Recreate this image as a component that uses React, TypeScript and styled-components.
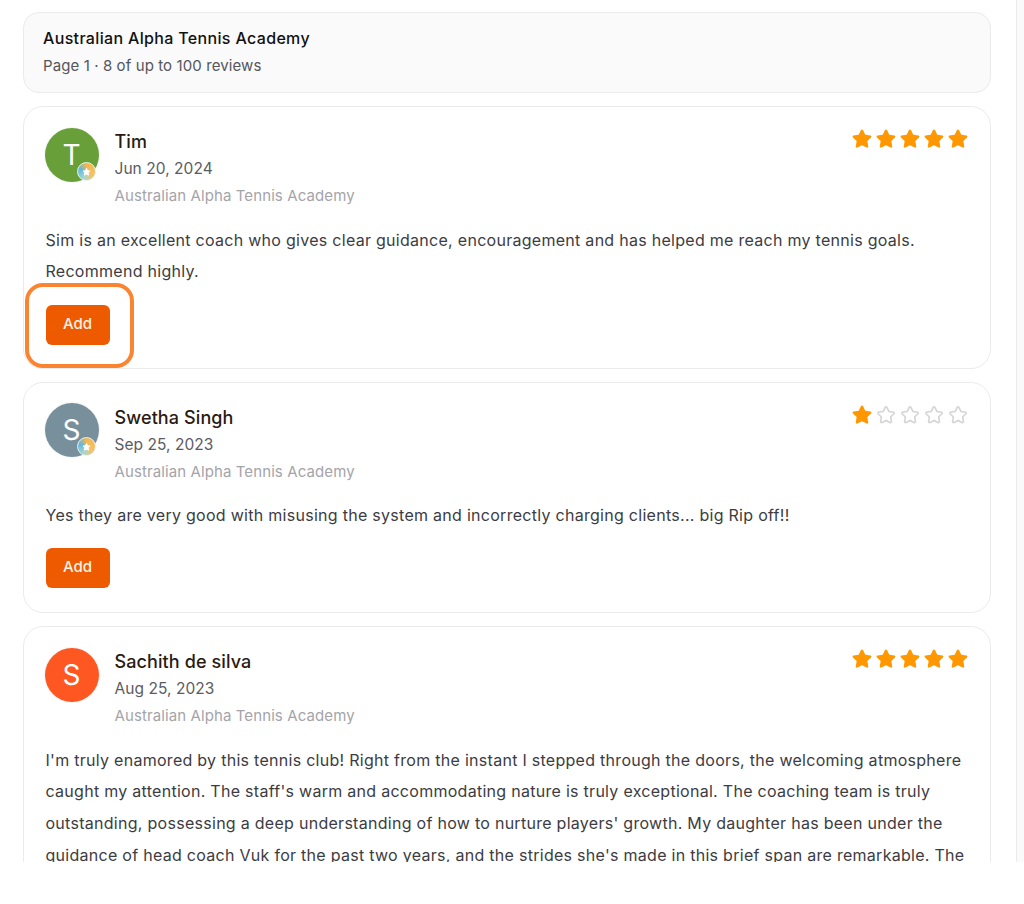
import React from 'react'
import styled, { createGlobalStyle } from 'styled-components'

const GlobalStyle = createGlobalStyle`
  html, body {
    margin: 0;
    padding: 0;
    background: #ffffff;
    font-family: Inter, "Liberation Sans", sans-serif;
  }
`

const Viewport = styled.div`
  height: 862px;
  width: 1024px;
  overflow: hidden;
  display: flex;
`

const Content = styled.main`
  width: 1016px;
  box-sizing: border-box;
  padding: 12px 25px 0 23px;
  display: flex;
  flex-direction: column;
  gap: 13px;
`

const ScrollTrack = styled.div`
  width: 8px;
  background: #fafafa;
  border-left: 1px solid #ebebeb;
  box-sizing: border-box;
`

const Summary = styled.header`
  height: 81.3px;
  box-sizing: border-box;
  flex-shrink: 0;
  background: #fafafa;
  border: 1.5px solid #ebebeb;
  border-radius: 16px;
  padding: 15px 19px;
`

const SummaryTitle = styled.h1`
  margin: 0;
  font-size: 16px;
  line-height: 20px;
  font-weight: 500;
  letter-spacing: 0.34px;
  color: #111111;
`

const SummaryMeta = styled.p`
  margin: 8px 0 0;
  font-size: 15px;
  line-height: 20px;
  letter-spacing: 0.1px;
  color: #55555c;
`

const Card = styled.article<{ $height?: number }>`
  position: relative;
  box-sizing: border-box;
  flex-shrink: 0;
  height: ${p => (p.$height ? `${p.$height}px` : 'auto')};
  border: 1.5px solid #ebebeb;
  border-radius: 20px;
  padding: 20.3px 21px 15px 20.5px;
  background: #ffffff;
`

const CardTop = styled.div`
  display: flex;
  justify-content: space-between;
  align-items: flex-start;
`

const Author = styled.div`
  display: flex;
  gap: 16px;
`

const Avatar = styled.div<{ $color: string }>`
  position: relative;
  width: 54px;
  height: 54px;
  border-radius: 50%;
  background: ${p => p.$color};
  color: #ffffff;
  font-size: 28px;
  display: flex;
  align-items: center;
  justify-content: center;
  flex-shrink: 0;
  box-shadow: 0 0 0 1px rgba(0, 0, 0, 0.04);
`

const Badge = styled.span`
  position: absolute;
  right: 3px;
  bottom: 1px;
  width: 19px;
  height: 19px;
  border-radius: 50%;
  border: 1.5px solid #e8f1f2;
  box-sizing: border-box;
  background: conic-gradient(#f6b64c 0deg, #f3c368 130deg, #a8d8cf 200deg, #62b8dd 290deg, #f6b64c 360deg);
  display: flex;
  align-items: center;
  justify-content: center;
`

const AuthorText = styled.div`
  display: flex;
  flex-direction: column;
  padding-top: 3.7px;
`

const AuthorName = styled.div`
  font-size: 18px;
  line-height: 22px;
  font-weight: 500;
  letter-spacing: 0.1px;
  color: #2a1a12;
`

const ReviewDate = styled.div`
  margin-top: 6px;
  font-size: 15.5px;
  line-height: 20px;
  letter-spacing: 0.05px;
  color: #5b5b62;
`

const Place = styled.div`
  margin-top: 7px;
  font-size: 15px;
  line-height: 20px;
  letter-spacing: 0.1px;
  color: #a4a4aa;
`

const Stars = styled.div`
  display: flex;
  gap: 1.9px;
  margin-top: -0.5px;
`

const ReviewBody = styled.p`
  margin: 18.3px 0 0 1px;
  font-size: 16px;
  line-height: 31.7px;
  letter-spacing: 0.28px;
  color: #3c3c42;
`

const AddButton = styled.button<{ $top: number }>`
  display: block;
  margin: ${p => p.$top}px 0 0 1px;
  width: 64px;
  height: 40px;
  border: none;
  border-radius: 6px;
  background: #ee5a00;
  color: #fff3e8;
  font-family: inherit;
  font-size: 15px;
  font-weight: 500;
  padding: 0 0 3px;
`

const Callout = styled.div`
  position: absolute;
  left: 0.5px;
  top: 175.7px;
  width: 109px;
  height: 85px;
  box-sizing: border-box;
  border: 4px solid #fb8431;
  border-radius: 18px;
  pointer-events: none;
`

const STAR_PATH =
  'M12 2.6c.5 0 .9.3 1.1.7l2.5 5.2 5.6.8c1 .2 1.4 1.4.7 2.1l-4.1 4 1 5.7c.2 1-.9 1.8-1.8 1.3L12 19.8l-5 2.6c-.9.5-2-.3-1.8-1.3l1-5.7-4.1-4c-.7-.7-.3-1.9.7-2.1l5.6-.8 2.5-5.2c.2-.4.6-.7 1.1-.7z'

function Star({ filled }: { filled: boolean }) {
  return (
    <svg width="22" height="22" viewBox="0 0 24 24">
      <path
        d={STAR_PATH}
        fill={filled ? '#ff9800' : 'none'}
        stroke={filled ? 'none' : '#d4d4d4'}
        strokeWidth={filled ? 0 : 2}
        transform={filled ? undefined : 'translate(1.6 1.8) scale(0.87)'}
      />
    </svg>
  )
}

function Rating({ value }: { value: number }) {
  return (
    <Stars>
      {[1, 2, 3, 4, 5].map(n => (
        <Star key={n} filled={n <= value} />
      ))}
    </Stars>
  )
}

type Review = {
  name: string
  initial: string
  color: string
  date: string
  rating: number
  badge: boolean
  body: string
  height?: number
  buttonTop?: number
  callout?: boolean
}

const PLACE = 'Australian Alpha Tennis Academy'

const reviews: Review[] = [
  {
    name: 'Tim',
    initial: 'T',
    color: '#689f38',
    date: 'Jun 20, 2024',
    rating: 5,
    badge: true,
    body: 'Sim is an excellent coach who gives clear guidance, encouragement and has helped me reach my tennis goals. Recommend highly.',
    height: 262.8,
    buttonTop: 17.2,
    callout: true,
  },
  {
    name: 'Swetha Singh',
    initial: 'S',
    color: '#78909c',
    date: 'Sep 25, 2023',
    rating: 1,
    badge: true,
    body: 'Yes they are very good with misusing the system and incorrectly charging clients... big Rip off!!',
    height: 231.4,
    buttonTop: 16.2,
  },
  {
    name: 'Sachith de silva',
    initial: 'S',
    color: '#ff5722',
    date: 'Aug 25, 2023',
    rating: 5,
    badge: false,
    body: "I'm truly enamored by this tennis club! Right from the instant I stepped through the doors, the welcoming atmosphere caught my attention. The staff's warm and accommodating nature is truly exceptional. The coaching team is truly outstanding, possessing a deep understanding of how to nurture players' growth. My daughter has been under the guidance of head coach Vuk for the past two years, and the strides she's made in this brief span are remarkable. The",
  },
]

export default function App() {
  return (
    <>
      <GlobalStyle />
      <Viewport>
        <Content>
          <Summary>
            <SummaryTitle>Australian Alpha Tennis Academy</SummaryTitle>
            <SummaryMeta>Page 1 · 8 of up to 100 reviews</SummaryMeta>
          </Summary>
          {reviews.map(review => (
            <Card key={review.name} $height={review.height}>
              <CardTop>
                <Author>
                  <Avatar $color={review.color}>
                    {review.initial}
                    {review.badge && (
                      <Badge>
                        <svg width="9" height="9" viewBox="0 0 24 24">
                          <path d={STAR_PATH} fill="#ffffff" />
                        </svg>
                      </Badge>
                    )}
                  </Avatar>
                  <AuthorText>
                    <AuthorName>{review.name}</AuthorName>
                    <ReviewDate>{review.date}</ReviewDate>
                    <Place>{PLACE}</Place>
                  </AuthorText>
                </Author>
                <Rating value={review.rating} />
              </CardTop>
              <ReviewBody>{review.body}</ReviewBody>
              {review.buttonTop !== undefined && <AddButton $top={review.buttonTop}>Add</AddButton>}
              {review.callout && <Callout />}
            </Card>
          ))}
        </Content>
        <ScrollTrack />
      </Viewport>
    </>
  )
}
